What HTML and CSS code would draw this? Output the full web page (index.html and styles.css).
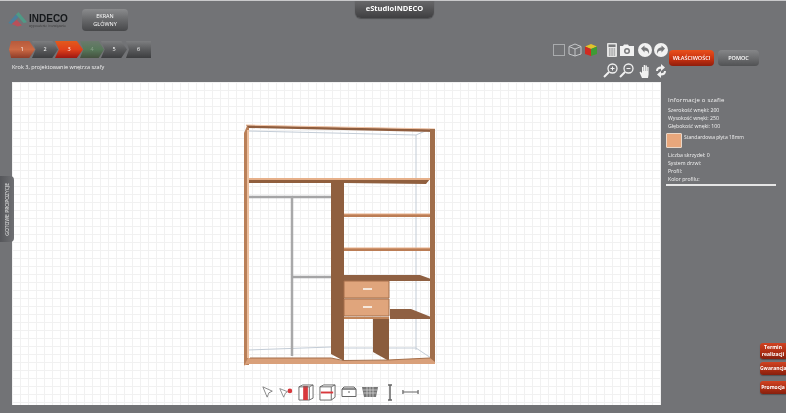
FILE: index.html
```html
<!DOCTYPE html>
<html lang="pl">
<head>
<meta charset="utf-8">
<title>eStudioINDECO</title>
<link rel="stylesheet" href="styles.css">
</head>
<body>
<div class="page">
  <div class="title-tab">eStudioINDECO</div>
  <header class="header">
    <div class="head-left">
      <div class="brand-row">
        <div class="logo">
          <svg class="logo-mark" viewBox="0 0 24 20" width="21" height="17">
            <path d="M0 13 9 3l3 3-8 8z" fill="#4a7f9c"/>
            <path d="M9 3l3-3 10 12-4 1z" fill="#4f9a86"/>
            <path d="M4 14l6-5 6 7-5 1z" fill="#b8505a"/>
          </svg>
          <div class="logo-text">
            <span class="logo-name">INDECO</span>
            <span class="logo-sub">wyposażenie i rozwiązania</span>
          </div>
        </div>
        <button class="btn-main">EKRAN<br>GŁÓWNY</button>
      </div>
      <ol class="steps">
        <li class="step step-orange">1</li>
        <li class="step step-grey">2</li>
        <li class="step step-red">3</li>
        <li class="step step-green">4</li>
        <li class="step step-grey">5</li>
        <li class="step step-grey step-last">6</li>
      </ol>
      <p class="crumb">Krok 3, projektowanie wnętrza szafy</p>
    </div>
    <div class="head-right">
      <div class="tools">
        <div class="tool-row">
          <svg class="ti t-square" viewBox="0 0 12 12" width="12" height="12"><rect x=".5" y=".5" width="11" height="11" fill="none" stroke="#a9abad"/></svg>
          <svg class="ti t-cube" viewBox="0 0 14 14" width="14" height="14"><path d="M1 3.500 7 1l6 2.500v7.500L7 13l-6-2zM1 3.500 7 6l6-2.500M7 6v7" fill="none" stroke="#c4c6c8"/></svg>
          <svg class="ti t-color" viewBox="0 0 14 14" width="14" height="14"><path d="M1 3.500 7 1l6 2.500L7 6z" fill="#e2c32a"/><path d="M1 3.500 7 6v7l-6-2z" fill="#cf2b22"/><path d="M13 3.500 7 6v7l6-2z" fill="#3f9b35"/></svg>
          <svg class="ti t-calc" viewBox="0 0 10 14" width="10" height="14"><rect width="10" height="14" rx="1" fill="#e4e4e4"/><rect x="1.500" y="1.500" width="7" height="2.500" fill="#77787a"/><path d="M2 6h1.500M4.300 6h1.500M6.600 6h1.500M2 8h1.500M4.300 8h1.500M6.600 8h1.500M2 10h1.500M4.300 10h1.500M6.600 10h1.500M2 12h1.500M4.300 12h1.500M6.600 12h1.500" stroke="#77787a" stroke-width="1.200"/></svg>
          <svg class="ti t-cam" viewBox="0 0 14 12" width="14" height="12"><path d="M0 2h3l1-1.500h4L9 2h5v10H0z" fill="#f1f1f1"/><circle cx="7" cy="7" r="3" fill="#77787a"/><circle cx="7" cy="7" r="1.500" fill="#f1f1f1"/></svg>
          <svg class="ti t-undo" viewBox="0 0 14 14" width="14" height="14"><circle cx="7" cy="7" r="7" fill="#f1f1f1"/><path d="M3 5.500 6.500 2.500v2c3.500 0 5 2.500 4.500 6.500-.8-2.500-2-3.500-4.500-3.500v2z" fill="#77787a"/></svg>
          <svg class="ti t-redo" viewBox="0 0 14 14" width="14" height="14"><circle cx="7" cy="7" r="7" fill="#f1f1f1"/><path d="M11 5.500 7.500 2.500v2c-3.500 0-5 2.500-4.500 6.500.8-2.500 2-3.500 4.500-3.500v2z" fill="#77787a"/></svg>
        </div>
        <div class="tool-row tool-row-2">
          <svg class="ti" viewBox="0 0 15 15" width="15" height="15"><circle cx="9.500" cy="5.500" r="4.500" fill="none" stroke="#f1f1f1" stroke-width="1.300"/><path d="M6 9 1 14" stroke="#f1f1f1" stroke-width="2"/><path d="M7.500 5.500h4M9.500 3.500v4" stroke="#f1f1f1"/></svg>
          <svg class="ti" viewBox="0 0 15 15" width="15" height="15"><circle cx="9.500" cy="5.500" r="4.500" fill="none" stroke="#f1f1f1" stroke-width="1.300"/><path d="M6 9 1 14" stroke="#f1f1f1" stroke-width="2"/><path d="M7.500 5.500h4" stroke="#f1f1f1"/></svg>
          <svg class="ti t-hand" viewBox="0 0 12 14" width="12" height="14"><path d="M3 14 .5 8.500l1-1L3 9V3h1.300v4h.4V1h1.400v6h.4V1.500h1.400V7h.4V3h1.300v7.500L9 14z" fill="#f1f1f1"/></svg>
          <svg class="ti t-sync" viewBox="0 0 12 14" width="12" height="14"><path d="M1 7c0-3 2-4.500 5-4.500V0l4 3.500L6 7V4.800C4 4.800 3 5.500 3 7zM11 7c0 3-2 4.500-5 4.500V14l-4-3.500L6 7v2.200c2 0 3-.7 3-2.200z" fill="#f1f1f1"/></svg>
        </div>
      </div>
      <div class="head-actions">
        <button class="btn-action btn-props">WŁAŚCIWOŚCI</button>
        <button class="btn-action btn-help">POMOC</button>
      </div>
    </div>
  </header>
  <main class="main">
    <section class="canvas">
      <svg class="wardrobe" viewBox="235 115 210 260" width="210" height="260">
        <g fill="none" stroke="#c3ccd6" stroke-width="1">
          <path d="M248 131 416 135V350M416 135 430 129M248 350 331 347M344 348H416L431 358"/>
        </g>
        <!-- rails -->
        <path d="M249 197H335" stroke="#a5a5a6" stroke-width="2.500"/>
        <path d="M292 197V356" stroke="#a8a8a9" stroke-width="2.500"/>
        <path d="M292 277H335" stroke="#a5a5a6" stroke-width="2.500"/>
        <!-- back dividers -->
        <path d="M331 180H344V361L331 354z" fill="#8f5f3f"/>
        <path d="M373 318H389V361L373 352z" fill="#8a5c3d"/>
        <!-- shelves -->
        <path d="M248 179H331V183H248zM331 179H430L426 184 344 183H331z" fill="#905f3e"/>
        <path d="M248 178H431V180H248z" fill="#e6b08a"/>
        <path d="M344 214H431V217H344zM344 248H431V251H344z" fill="#bb7d55"/>
        <path d="M344 213.500H431V214.500H344zM344 247.500H431V248.500H344z" fill="#e8b08a"/>
        <path d="M344 275H420L431 279V281H344z" fill="#8f6042"/>
        <path d="M390 309H411L431 317V319H390z" fill="#8f6042"/>
        <path d="M344 317H389V319H344z" fill="#c28559"/>
        <!-- drawers -->
        <path d="M344 281H389V298H344zM344 299H389V316H344z" fill="#e0a57c" stroke="#a56f4a" stroke-width="1"/>
        <path d="M363 289H372M363 307H372" stroke="#f6e8dc" stroke-width="2"/>
        <!-- frame -->
        <path d="M246 125 435 129V132L248 128z" fill="#8f5d3e"/>
        <path d="M246 124.500 435 128.500V129.500L246 125.500z" fill="#efc3a5"/>
        <path d="M244 133 247 126 249 128V365H244z" fill="#b97f58"/>
        <path d="M247 130H249V358H247z" fill="#ecc0a0"/>
        <path d="M430 129H435V362H430z" fill="#a06e4b"/>
        <path d="M248 358H331L343 361 388 360 430 358 435 362V364H247L244 366z" fill="#d9a07a"/>
        <path d="M250 358H331L343 360.500 388 360 430 358" fill="none" stroke="#a56f4a"/>
      </svg>
      <div class="bottom-tools">
        <svg viewBox="0 0 14 14" width="12" height="12"><path d="M1 1 12 6 8 8 6 13z" fill="#fff" stroke="#777"/></svg>
        <svg viewBox="0 0 18 14" width="14" height="11"><path d="M1 2 11 6 8 8 6 13z" fill="#fff" stroke="#777"/><circle cx="14" cy="5" r="3" fill="#d8383c"/></svg>
        <svg viewBox="0 0 17 18" width="16" height="17"><path d="M1 3 5 1H16V15L12 17H1z" fill="#fff" stroke="#666"/><rect x="5.500" y="2" width="5" height="15" fill="#d8383c"/><path d="M1 3H12V17M12 3 16 1" fill="none" stroke="#666"/></svg>
        <svg viewBox="0 0 18 18" width="17" height="17"><path d="M1 3 5 1H17V14L13 17H1z" fill="#fff" stroke="#666"/><path d="M1 3H13V17M13 3 17 1" fill="none" stroke="#666"/><path d="M2 9H15" stroke="#d8383c" stroke-width="2"/></svg>
        <svg viewBox="0 0 16 12" width="16" height="12"><path d="M1 3H15V10.500H1zM3 1H13L15 3H1z" fill="#fff" stroke="#666"/><path d="M7 6H9" stroke="#666"/></svg>
        <svg viewBox="0 0 16 12" width="16" height="12"><path d="M0 1H16L14 11H2z" fill="#777"/><path d="M1 4H15M1.500 7H14.500M5 1V11M8 1V11M11 1V11" stroke="#ddd" stroke-width=".7"/></svg>
        <svg class="tool-dim" viewBox="0 0 6 17" width="6" height="17"><path d="M3 1V16M1 1H5M1 16H5" stroke="#666" stroke-width="1.500"/></svg>
        <svg class="tool-dim" viewBox="0 0 18 6" width="17" height="6"><path d="M1 3H17M1 1V5M17 1V5" stroke="#666" stroke-width="1.300"/></svg>
      </div>
    </section>
    <aside class="panel">
      <h2 class="panel-title">Informacje o szafie</h2>
      <p class="row">Szerokość wnęki: 200</p>
      <p class="row">Wysokość wnęki: 250</p>
      <p class="row">Głębokość wnęki: 100</p>
      <div class="material">
        <div class="swatch"></div>
        <span class="material-name">Standardowa płyta 18mm</span>
      </div>
      <p class="row">Liczba skrzydeł: 0</p>
      <p class="row">System drzwi:</p>
      <p class="row">Profil:</p>
      <p class="row row-last">Kolor profilu:</p>
    </aside>
  </main>
  <div class="side-tab"><span>GOTOWE PROPOZYCJE</span></div>
  <nav class="side-links">
    <a class="side-link side-link-tall">Termin<br>realizacji</a>
    <a class="side-link">Gwarancja</a>
    <a class="side-link side-link-gap">Promocja</a>
  </nav>
</div>
</body>
</html>
```

FILE: styles.css
```css
* { box-sizing: border-box; }
html, body { margin: 0; padding: 0; }
body { font-family: "Open Sans", "Liberation Sans", sans-serif; color: #f2f2f2; background: #727376; overflow: hidden; }
.page { position: relative; width: 786px; height: 413px; overflow: hidden; display: flex; flex-direction: column; background: #727376; border-top: 1px solid #c9c9cb; filter: blur(.35px); }
svg { display: block; }

.title-tab { position: absolute; left: 355px; top: -1px; width: 79px; height: 18px; border-radius: 0 0 6px 6px; background: linear-gradient(#6a6a6c, #3f3f41); box-shadow: 0 1px 1px rgba(0,0,0,.3); color: #fff; font-size: 7.500px; font-weight: 700; line-height: 16px; text-align: center; }

.header { height: 81px; flex: none; display: flex; justify-content: space-between; }
.head-left { padding: 8px 0 0 8px; }
.brand-row { display: flex; align-items: flex-start; }
.logo { width: 74px; height: 22px; display: flex; align-items: center; }
.logo-mark { flex: none; }
.logo-text { display: flex; flex-direction: column; margin-left: 0; }
.logo-name { font-family: "Liberation Sans", sans-serif; font-size: 10px; font-weight: 700; line-height: 11px; color: #15181b; }
.logo-sub { font-size: 3px; line-height: 4px; color: #3a3a3a; white-space: nowrap; }
.btn-main { width: 46px; height: 22px; padding: 0; border: 0; border-radius: 4px; background: linear-gradient(#8a8b8d, #6a6b6d 45%, #47484a); color: #fff; font-family: inherit; font-size: 5.500px; line-height: 8px; text-align: center; }

.steps { display: flex; list-style: none; margin: 10px 0 0 1px; padding: 0; }
.step { width: 26px; height: 17px; margin-right: -3px; color: #fff; font-size: 5.500px; line-height: 17px; text-align: center; clip-path: polygon(0 0, 78% 0, 100% 50%, 78% 100%, 0 100%, 14% 50%); }
.step-orange { background: linear-gradient(#b75a3c, #cc6a45 50%, #8d3c28); clip-path: polygon(8% 0, 78% 0, 100% 50%, 78% 100%, 8% 100%, 0 50%); }
.step-grey { background: linear-gradient(#7d7e80, #5a5b5d 50%, #3c3d3f); }
.step-red { width: 28px; background: linear-gradient(#e25a1c, #e0401a 50%, #9c1712); }
.step-green { width: 24px; background: linear-gradient(#6a7a6c, #57785a 50%, #44503f); color: #8aa08a; }
.step-last { width: 25px; margin-left: 2px; clip-path: polygon(0 0, 100% 0, 100% 100%, 0 100%, 12% 50%); }
.crumb { margin: 5px 0 0 4px; font-size: 5.500px; line-height: 9px; white-space: nowrap; }

.head-right { display: flex; padding: 41px 27px 0 0; }
.tools { width: 116px; }
.tool-row { display: flex; align-items: center; height: 15px; }
.ti { flex: none; }
.t-cube { margin-left: 3px; }
.t-color { margin-left: 2px; }
.t-calc { margin-left: 9px; }
.t-cam { margin-left: 3px; }
.t-undo { margin-left: 4px; }
.t-redo { margin-left: 2px; }
.tool-row-2 { margin-top: 6px; padding-left: 50px; gap: 1px; }
.t-hand { margin-left: 4px; }
.t-sync { margin-left: 3px; }
.head-actions { display: flex; gap: 4px; margin: 8px 0 0 0; align-items: flex-start; }
.btn-action { height: 16px; padding: 0; border: 0; border-radius: 4px; color: #fff; font-family: inherit; font-size: 5.500px; font-weight: 600; text-align: center; }
.btn-props { width: 45px; background: linear-gradient(#e8501c, #c9310f 55%, #8f1d0c); }
.btn-help { width: 41px; background: linear-gradient(#858688, #6c6d6f 50%, #515254); }

.main { display: flex; flex: 1; min-height: 0; padding: 0 0 8px 12px; }
.canvas { position: relative; width: 649px; height: 323px; flex: none; display: flex; flex-direction: column; align-items: center; background-color: #fff; background-image: linear-gradient(#f1f1f1 1px, transparent 1px), linear-gradient(90deg, #f1f1f1 1px, transparent 1px); background-size: 8px 8px; }
.wardrobe { flex: none; margin: 33px 0 0 7px; }
.bottom-tools { display: flex; align-items: center; gap: 5px; height: 20px; margin: 7px 0 0 8px; }
.tool-dim { margin-left: 4px; }

.panel { width: 110px; margin: 0 0 0 5px; padding-top: 14px; align-self: flex-start; border-bottom: 2px solid #e6e6e6; height: 104px; }
.panel-title { margin: 0 0 1px 2px; font-size: 6px; font-weight: 400; line-height: 9px; letter-spacing: .2px; }
.row { margin: 0 0 0 2px; font-size: 5.200px; line-height: 8px; white-space: nowrap; }
.material { display: flex; align-items: flex-start; margin: 3px 0 3px 0; }
.swatch { width: 16px; height: 15px; background: #e8a77c; border: 1px solid #e9d7c8; border-radius: 1px; }
.material-name { margin: 1px 0 0 2px; font-size: 5px; line-height: 7px; white-space: nowrap; }

.side-tab { position: absolute; left: 0; top: 175px; width: 14px; height: 66px; background: linear-gradient(90deg, #55565a, #6f7073); border-radius: 0 4px 4px 0; display: flex; align-items: center; justify-content: center; }
.side-tab span { writing-mode: vertical-rl; transform: rotate(180deg); font-size: 5px; color: #ececec; white-space: nowrap; }
.side-links { position: absolute; right: 0; top: 342px; width: 26px; display: flex; flex-direction: column; align-items: stretch; }
.side-link { height: 13px; margin-top: 3px; background: linear-gradient(#cf4322, #aa2c12 60%, #86200e); border-radius: 3px 0 0 3px; color: #fff; font-size: 5px; font-weight: 700; line-height: 13px; text-align: center; white-space: nowrap; box-shadow: 0 1px 1px rgba(0,0,0,.3); }
.side-link-tall { height: 16px; margin-top: 0; line-height: 7px; padding-top: 1px; }
.side-link-gap { margin-top: 6px; }
```
